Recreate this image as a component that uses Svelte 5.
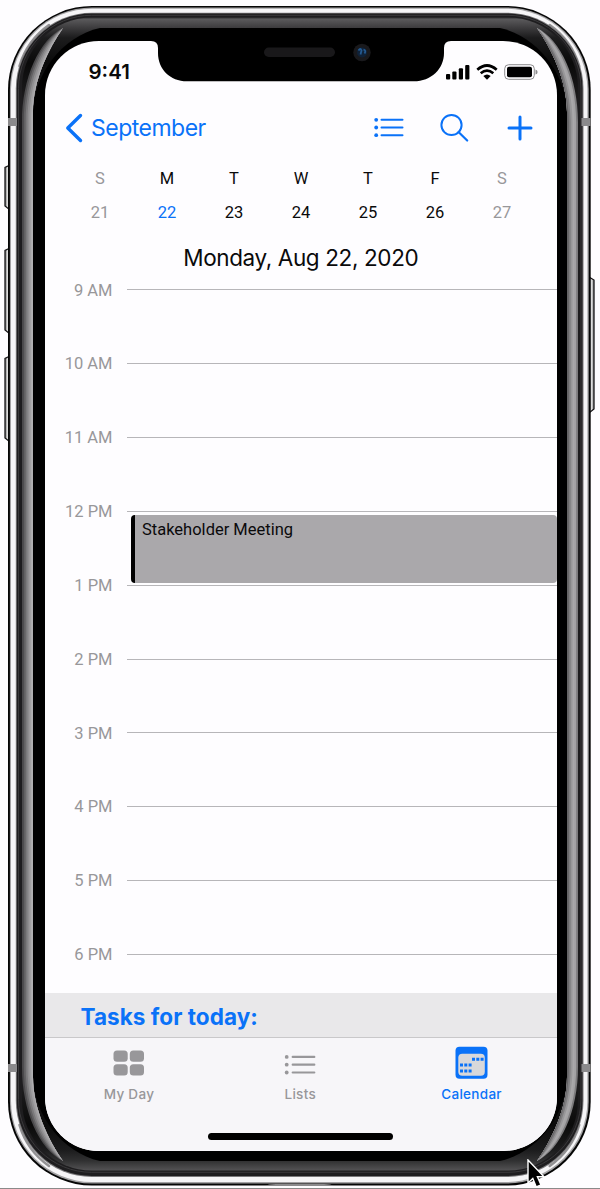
<script>
  const days = [
    { letter: 'S', date: 21, muted: true },
    { letter: 'M', date: 22, today: true },
    { letter: 'T', date: 23 },
    { letter: 'W', date: 24 },
    { letter: 'T', date: 25 },
    { letter: 'F', date: 26 },
    { letter: 'S', date: 27, muted: true }
  ];
  const hours = ['9 AM', '10 AM', '11 AM', '12 PM', '1 PM', '2 PM', '3 PM', '4 PM', '5 PM', '6 PM'];

  // The bezel reflection is built from nested crescents, each one starting 2px further in.
  const shadesLeft = ['#4a494b', '#626163', '#7a797b', '#8f8e90', '#a09fa1', '#b0afb1'];
  const shadesRight = ['#7c7b7d', '#a3a2a4', '#a9a8aa', '#989799', '#7f7e80', '#656466'];
  function crescent(k) {
    const x = 22 + k * 1.83;
    const cx = 39 + k * 2;
    const cy = 40 + k;
    return `M63 28 C${cx} ${cy} ${x} 78 ${x} 122 V1067 C${x} 1111 ${cx} ${1189 - cy} 63 1161 C49 1141 33 1109 33 1077 V112 C33 80 49 48 63 28Z`;
  }
  const corners = [
    '',
    'translate(598.7 0) scale(-1 1)',
    'translate(0 1191) scale(1 -1)',
    'translate(598.7 1191) scale(-1 -1)'
  ];
</script>

<div class="stage">
  <svg class="frame" viewBox="0 0 600 1189" aria-hidden="true">
    <defs>
      <linearGradient id="bandV" x1="0" y1="17" x2="0" y2="1171" gradientUnits="userSpaceOnUse">
        <stop offset="0" stop-color="#29292b" />
        <stop offset="0.002" stop-color="#5a595b" />
        <stop offset="0.0095" stop-color="#3c3b3d" />
        <stop offset="0.018" stop-color="#1c1c1d" />
        <stop offset="0.04" stop-color="#0a0a0a" />
        <stop offset="0.08" stop-color="#222123" />
        <stop offset="0.92" stop-color="#222123" />
        <stop offset="0.96" stop-color="#0a0a0a" />
        <stop offset="0.982" stop-color="#1c1c1d" />
        <stop offset="0.991" stop-color="#303031" />
        <stop offset="1" stop-color="#555456" />
      </linearGradient>
      <linearGradient id="key">
        <stop offset="0" stop-color="#777" />
        <stop offset="0.5" stop-color="#ddd" />
        <stop offset="1" stop-color="#888" />
      </linearGradient>
    </defs>
    <g fill="url(#key)" stroke="#161617" stroke-width="1.3">
      <path d="M10 165 L5 167.500 V206 L10 210Z" />
      <path d="M10 248 L5 250.500 V330 L10 334Z" />
      <path d="M10 356 L5 358.500 V438 L10 442Z" />
      <path d="M589 277 L594 280 V409 L589 413Z" />
    </g>
    <rect x="8" y="6" width="582.700" height="1179.500" rx="84" fill="#060606" />
    <rect x="9.900" y="7.500" width="578.800" height="1176" rx="82" fill="#a3a2a4" />
    <rect x="11" y="8.700" width="576.400" height="1173.300" rx="81" fill="#f6f5f7" />
    {#each corners as t}
      <path transform={t} d="M19.500 66 A77 77 0 0 1 49 25" fill="none" stroke="#929193" stroke-width="2.600" stroke-linecap="round" />
    {/each}
    <rect x="15.800" y="12.700" width="567.700" height="1164.300" rx="76" fill="#7a797b" />
    <rect x="16.800" y="13.500" width="565.700" height="1162.500" rx="75" fill="#1e1d1f" />
    <rect x="18.500" y="15.300" width="562.500" height="1157" rx="73" fill="none" stroke="#3a393b" />
    <rect x="22" y="17.500" width="556" height="1153" rx="70" fill="url(#bandV)" />
    <path d="M100 28 H500 C538 36 567 76 567 112 V1077 C567 1113 538 1153 500 1161 H100 C62 1153 33 1113 33 1077 V112 C33 76 62 36 100 28Z" fill="#000" />
    {#each shadesLeft as shade, k}
      <path fill={shade} d={crescent(k)} />
    {/each}
    <g transform="translate(600 0) scale(-1 1)">
      {#each shadesRight as shade, k}
        <path fill={shade} d={crescent(k)} />
      {/each}
    </g>
    <g fill="#8b8a8c">
      <rect x="8" y="118" width="9" height="8" />
      <rect x="581.500" y="118" width="9" height="8" />
      <rect x="8" y="1064" width="9" height="8" />
      <rect x="581.500" y="1064" width="9" height="8" />
    </g>
    <path d="M265 1186 Q268 1184 276 1184 H324 Q331 1184 334 1186Z" fill="#8b8a8c" />
    <rect y="1188" width="600" height="1" fill="#8a8a8a" />
  </svg>

  <main class="screen">
    <header class="status">
      <span class="time">9:41</span>
      <span class="signals">
        <svg width="24" height="16" viewBox="0 0 24 16">
          <rect x="0" y="10" width="4.200" height="5.500" rx="1" />
          <rect x="6.300" y="7.500" width="4.200" height="8" rx="1" />
          <rect x="12.800" y="4.300" width="4.200" height="11.200" rx="1" />
          <rect x="19.200" y="1" width="4.200" height="14.500" rx="1" />
        </svg>
        <svg width="22" height="16" viewBox="0 0 22 16">
          <path d="M1.300 5.700 Q11 -2.700 20.700 5.700 M4.700 9.300 Q11 4 17.300 9.300" fill="none" stroke="#000" stroke-width="2.700" />
          <path d="M7.300 12 Q11 9 14.700 12 L11 15.700Z" />
        </svg>
        <svg width="34" height="16" viewBox="0 0 34 16">
          <rect x="0.700" y="0.700" width="29.600" height="14.600" rx="4" fill="none" stroke="#8d8c8e" stroke-width="1" />
          <rect x="3" y="2.800" width="25" height="10.400" rx="2" />
          <path d="M31.500 5.500 Q33.600 6 33.600 8 T31.500 10.500Z" fill="#8d8c8e" />
        </svg>
      </span>
    </header>

    <nav class="toolbar">
      <a class="back" href="#month">
        <svg width="18" height="30" viewBox="0 0 18 30"><path d="M15.500 2.500 L2.800 15 L15.500 27.500" fill="none" stroke="currentColor" stroke-width="3.400" stroke-linecap="round" stroke-linejoin="round" /></svg>
        <span>September</span>
      </a>
      <svg class="act-list" width="31" height="22" viewBox="0 0 31 22">
        <g fill="currentColor"><circle cx="2.200" cy="2.800" r="1.900" /><circle cx="2.200" cy="10.500" r="1.900" /><circle cx="2.200" cy="18.200" r="1.900" /></g>
        <path d="M7.500 2.800 H28.500 M7.500 10.500 H28.500 M7.500 18.200 H28.500" stroke="currentColor" stroke-width="2" stroke-linecap="round" />
      </svg>
      <svg class="act-search" width="30" height="30" viewBox="0 0 30 30">
        <circle cx="11.500" cy="12" r="10.100" fill="none" stroke="currentColor" stroke-width="2" />
        <path d="M18.500 19 L27.200 27.500" stroke="currentColor" stroke-width="2.200" stroke-linecap="round" />
      </svg>
      <svg class="act-add" width="26" height="26" viewBox="0 0 26 26">
        <path d="M13 2 V24 M2 13 H24" stroke="currentColor" stroke-width="3" stroke-linecap="round" />
      </svg>
    </nav>

    <section class="week">
      {#each days as day}
        <div class="day" class:muted={day.muted}>
          <span>{day.letter}</span>
          <span class:today={day.today}>{day.date}</span>
        </div>
      {/each}
    </section>

    <h1>Monday, Aug 22, 2020</h1>

    <section class="timeline">
      {#each hours as hour, i}
        <div class="hour">
          <span class="label">{hour}</span>
          <span class="rule"></span>
          {#if i === 3}
            <div class="event">Stakeholder Meeting</div>
          {/if}
        </div>
      {/each}
    </section>

    <h2>Tasks for today:</h2>

    <footer>
      <div class="tabs">
        <div class="tab">
          <svg width="34" height="34" viewBox="0 0 34 34" fill="currentColor">
            <rect x="1.500" y="4.500" width="14.200" height="11.300" rx="3.500" /><rect x="17.800" y="4.500" width="14.200" height="11.300" rx="3.500" />
            <rect x="1.500" y="18.200" width="14.200" height="11.300" rx="3.500" /><rect x="17.800" y="18.200" width="14.200" height="11.300" rx="3.500" />
          </svg>
          <span>My Day</span>
        </div>
        <div class="tab">
          <svg width="34" height="34" viewBox="0 0 34 34">
            <g fill="currentColor"><circle cx="2.700" cy="10.900" r="1.900" /><circle cx="2.700" cy="18.700" r="1.900" /><circle cx="2.700" cy="26.500" r="1.900" /></g>
            <path d="M8.700 10.900 H30.300 M8.700 18.700 H30.300 M8.700 26.500 H30.300" stroke="currentColor" stroke-width="2.200" stroke-linecap="round" />
          </svg>
          <span>Lists</span>
        </div>
        <div class="tab active">
          <svg width="34" height="34" viewBox="0 0 34 34">
            <rect x="0.500" y="0.800" width="32" height="32" rx="4" fill="currentColor" />
            <rect x="3.300" y="7.800" width="26.500" height="22" rx="4" fill="#d8d8da" />
            <path d="M17 13.200 h3 m1.300 0 h3 m1.300 0 h3 M5 19 h3 m1.300 0 h3 m1.300 0 h3 M5 24.900 h3 m1.300 0 h3 m1.300 0 h3" stroke="currentColor" stroke-width="3" />
          </svg>
          <span>Calendar</span>
        </div>
      </div>
      <div class="home"></div>
    </footer>
  </main>

  <svg class="notch" width="300" height="43" viewBox="0 0 300 43" aria-hidden="true">
    <path d="M0 1 V0 H300 V1 Q293 1 293 8 V13 C293 29 280 41.300 263 41.300 H36 C19 41.300 7 29 7 13 V8 Q7 1 0 1Z" />
    <rect x="113" y="7.500" width="71" height="9.500" rx="4.700" fill="#19181a" />
    <circle cx="211" cy="12.500" r="8.700" fill="#19191c" />
    <circle cx="211" cy="12.500" r="5" fill="#102238" />
    <path d="M207.500 10.500 q2-3 3 0 l-1 4 M212.500 9.500 q3 1 1 4" fill="none" stroke="#245a91" stroke-width="1.800" />
  </svg>

  <svg class="cursor" width="20" height="32" viewBox="0 0 20 32" aria-hidden="true">
    <path d="M1 1 V24 L5.800 19.500 L9.300 28 L14 26 L10.400 17.700 H17Z" stroke="#fff" stroke-width="1.400" />
  </svg>
</div>

<style>
  :global(body) { margin: 0; background: #fefdff; }
  .stage {
    position: relative;
    box-sizing: border-box;
    width: 600px;
    height: 1189px;
    padding: 40.5px 43px 0 44.5px;
    overflow: hidden;
    font-family: Inter, "Liberation Sans", sans-serif;
    color: #0a0a0b;
  }
  .frame { position: absolute; inset: 0; width: 600px; height: 1189px; }
  .screen {
    position: relative;
    display: flex;
    flex-direction: column;
    height: 1110px;
    border-radius: 54px;
    overflow: hidden;
    background: #fefdff;
  }
  .status {
    display: flex;
    justify-content: space-between;
    align-items: center;
    flex: none;
    height: 62px;
    padding: 0 19px 0 44px;
  }
  .time { font-size: 20.5px; font-weight: 600; }
  .signals { display: flex; align-items: center; gap: 6px; }
  .toolbar {
    display: flex;
    align-items: center;
    flex: none;
    height: 50px;
    padding: 0 24px 0 20.5px;
    color: #0a72f8;
  }
  .back { display: flex; align-items: center; gap: 8px; margin-right: auto; color: inherit; text-decoration: none; font-size: 23px; letter-spacing: -0.5px; }
  .act-search { margin-left: 35px; }
  .act-add { margin-left: 37.5px; }
  .week {
    display: grid;
    grid-template-columns: repeat(7, 67px);
    flex: none;
    padding: 16px 0 0 22px;
    font: 16.5px/20px Roboto, sans-serif;
    text-align: center;
  }
  .day { display: flex; flex-direction: column; gap: 14.5px; }
  .muted { color: #98979a; }
  .today { color: #0a72f8; }
  h1 {
    flex: none;
    margin: 19.5px 0 0;
    font-size: 22.5px;
    line-height: 30px;
    font-weight: 400;
    letter-spacing: -0.38px;
    text-align: center;
  }
  .timeline { flex: none; height: 720px; padding-top: 8.1px; box-sizing: border-box; overflow: hidden; }
  .hour { position: relative; display: flex; align-items: flex-start; height: 73.83px; }
  .label { width: 68px; font: 16.5px/20px Roboto, sans-serif; color: #98979a; text-align: right; }
  .rule { flex: 1; height: 1px; margin: 8.8px 0 0 14.5px; background: #b7b6b9; }
  .event {
    position: absolute;
    top: 12.8px;
    left: 86.5px;
    right: 0;
    height: 68px;
    box-sizing: border-box;
    padding: 5.4px 0 0 7px;
    border-left: 4.5px solid #000;
    border-radius: 4px;
    background: #aaa8ab;
    font: 16.5px/20px Roboto, sans-serif;
  }
  h2 {
    flex: none;
    margin: 0;
    padding-left: 36px;
    height: 44px;
    font-size: 22.5px;
    line-height: 47px;
    font-weight: 700;
    letter-spacing: 0.05px;
    color: #0a72f8;
    background: #e9e8ea;
  }
  footer {
    display: flex;
    flex-direction: column;
    align-items: center;
    justify-content: space-between;
    flex: 1;
    border-top: 1px solid #c9c8ca;
    padding: 8px 0 11px;
    background: #f7f6f9;
  }
  .tabs { display: grid; grid-template-columns: repeat(3, 171.3px); }
  .tab { display: flex; flex-direction: column; align-items: center; gap: 5px; color: #98979a; font-size: 13.5px; line-height: 18px; font-weight: 500; letter-spacing: 0.3px; }
  .tab span { margin-right: 1px; }
  .active { color: #0a72f8; }
  .home { width: 185px; height: 7px; border-radius: 4px; background: #000; }
  .notch { position: absolute; left: 151px; top: 39.5px; }
  .cursor { position: absolute; left: 527px; top: 1159px; }
</style>
